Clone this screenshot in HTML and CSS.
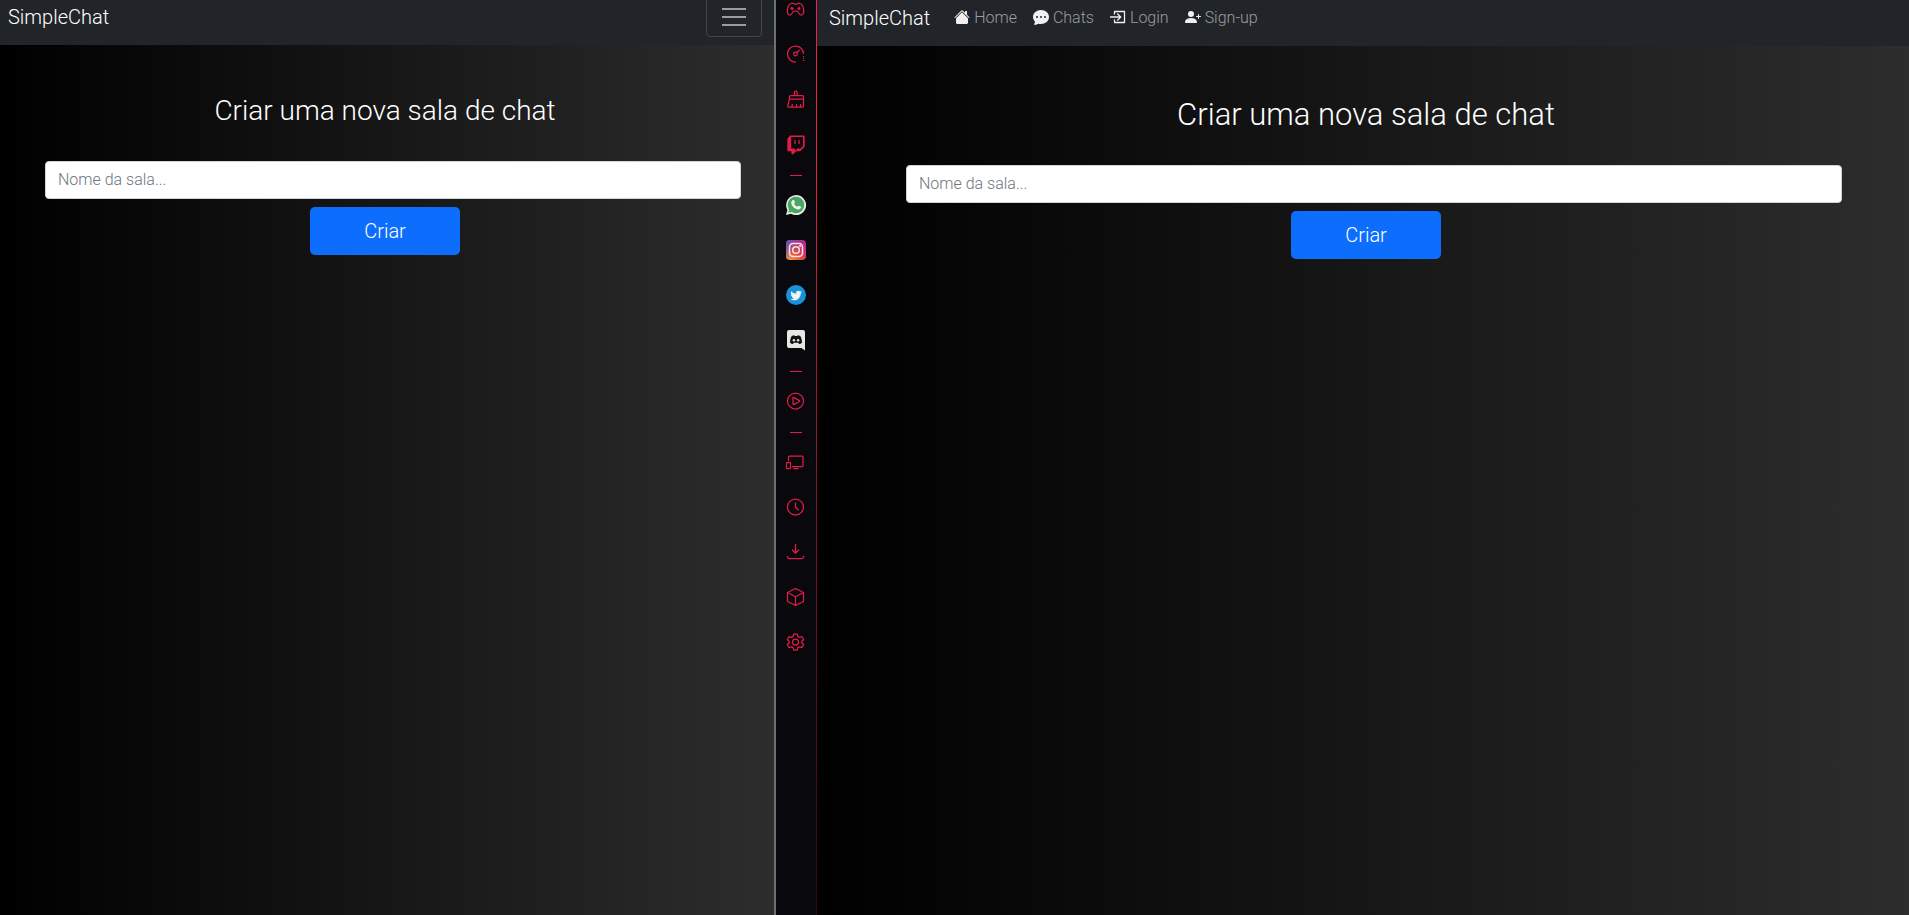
FILE: index.html
```html
<!DOCTYPE html>
<html lang="pt-BR">
<head>
<meta charset="utf-8">
<title>SimpleChat</title>
<link rel="stylesheet" href="styles.css">
</head>
<body>
<div class="screen">
  <section class="pane pane-narrow">
    <nav class="navbar">
      <a class="brand" href="#">SimpleChat</a>
      <button class="toggler" type="button" aria-label="Menu">
        <svg width="30" height="30" viewBox="0 0 30 30" fill="none" stroke="currentColor" stroke-width="2"><path d="M3 7h24M3 15h24M3 23h24"/></svg>
      </button>
    </nav>
    <main class="content">
      <h2 class="title">Criar uma nova sala de chat</h2>
      <form class="room-form">
        <input class="room-input" type="text" placeholder="Nome da sala..." aria-label="Nome da sala">
        <button class="create" type="button">Criar</button>
      </form>
    </main>
  </section>

  <aside class="sidebar">
    <button class="tool" type="button" aria-label="GX Corner"><svg viewBox="0 0 20 20"><path d="M5 4.500C6.500 3.500 7.500 4.500 8.500 5h2C11.500 4.500 12.500 3.500 14 4.500c2.500 1 3.500 4 3.700 7 .2 3-1 4.500-2.700 4.500-2 0-2.400-3.800-4-3.800H8C6.400 12.200 6 16 4 16c-1.700 0-2.900-1.500-2.700-4.500C1.500 8.500 2.500 5.500 5 4.500z"/><path class="fill" d="M5 9.500l1-1 1 1-1 1zM12 9.500l1-1 1 1-1 1z"/></svg></button>
    <button class="tool" type="button" aria-label="GX Control"><svg viewBox="0 0 20 20"><path d="M10 18a8 8 0 1 1 7.500-8"/><path d="M17.500 12v5" stroke-dasharray="1 1"/><circle cx="9.500" cy="10" r="1.800"/><path d="M10.800 8.700L13.500 6"/></svg></button>
    <button class="tool" type="button" aria-label="GX Cleaner"><svg viewBox="0 0 20 20"><path d="M8.500 6.500V3.500a1.300 1.300 0 0 1 2.600 0v3M3.500 10V7.500q0-1 1-1h12q1 0 1 1V17q0 1-1 1h-14q-1 0-.8-1L3.500 10zM3.500 10h14M6.500 15l-.8 3M10.500 15v3M14.500 15v3"/></svg></button>
    <button class="tool" type="button" aria-label="Twitch"><svg viewBox="0 0 20 20"><path class="fill" d="M4.500 2h13.500v10.500L14 16.500h-4L7 19.500H6v-2.800H2V5z"/><path fill="#08080d" stroke="none" d="M5.200 3H17v9l-2.500 2.500h-3L9 16.500v-2H5.200z"/><path d="M9 6v4M13 6v4"/></svg></button>
    <hr class="rule">
    <button class="tool" type="button" aria-label="WhatsApp"><svg viewBox="0 0 20 20"><path fill="#e9ecea" stroke="none" d="M0 20l1.400-5A10 10 0 1 1 5 18.700z"/><path fill="#48a860" stroke="none" d="M2.200 17.800l.9-3.200A8.300 8.300 0 1 1 5.600 17z"/><path fill="#f2f6f2" stroke="none" d="M6.700 5.100c.7-.4 1.200-.2 1.500.5l.7 1.600c.2.600-.7 1.200-.8 1.600.6 1.400 1.700 2.500 3.200 3 .4 0 .9-1.200 1.500-1l1.700.8c.7.300.7.700.4 1.500-.5 1.200-2 1.700-3.300 1.300-3.400-.9-5.600-3.200-6.300-6-.2-1.300.4-2.600 1.400-3.300z"/></svg></button>
    <button class="tool" type="button" aria-label="Instagram"><svg viewBox="0 0 20 20"><defs><linearGradient id="ig" x1="0" y1="1" x2="1" y2="0"><stop offset="0" stop-color="#f3ae3e"/><stop offset=".4" stop-color="#e7503f"/><stop offset=".7" stop-color="#c8307e"/><stop offset="1" stop-color="#a02c9b"/></linearGradient><linearGradient id="igb" x1="0" y1="0" x2=".6" y2=".4"><stop offset="0" stop-color="#3f5fd0"/><stop offset="1" stop-color="#7a3cc0" stop-opacity="0"/></linearGradient></defs><rect width="20" height="20" rx="4" fill="url(#ig)" stroke="none"/><rect width="20" height="20" rx="4" fill="url(#igb)" stroke="none"/><g stroke="#f6e6e4" stroke-width="1.500"><rect x="3.500" y="3.500" width="13" height="13" rx="3.500"/><circle cx="10" cy="10" r="3.300"/></g><circle cx="14" cy="6" r="1" fill="#f6e6e4" stroke="none"/></svg></button>
    <button class="tool" type="button" aria-label="Twitter"><svg viewBox="0 0 20 20"><circle cx="10" cy="10" r="10" fill="#1b91da" stroke="none"/><path transform="translate(4.300 4.300) scale(.73)" fill="#eef3f6" stroke="none" d="M5.026 15c6.038 0 9.341-5.003 9.341-9.334q.002-.211-.006-.422A6.700 6.700 0 0 0 16 3.542a6.700 6.700 0 0 1-1.889.518 3.300 3.300 0 0 0 1.447-1.817 6.500 6.500 0 0 1-2.087.793A3.286 3.286 0 0 0 7.875 6.030a9.320 9.320 0 0 1-6.767-3.429 3.290 3.290 0 0 0 1.018 4.382A3.300 3.300 0 0 1 .64 6.575v.045a3.290 3.290 0 0 0 2.632 3.218 3.200 3.200 0 0 1-.865.115 3 3 0 0 1-.614-.057 3.280 3.280 0 0 0 3.067 2.277A6.600 6.600 0 0 1 .780 13.580a6 6 0 0 1-.780-.045A9.340 9.340 0 0 0 5.026 15"/></svg></button>
    <button class="tool" type="button" aria-label="Discord"><svg viewBox="0 0 20 20"><path fill="#e6e6e3" stroke="none" d="M3 0h14q2 0 2 2v18.500L15.500 18H3q-2 0-2-2V2q0-2 2-2z"/><path fill="#111114" stroke="none" d="M5.500 6.200Q7 5.200 8.300 5.200l.4.800h2.600l.4-.8q1.300 0 2.800 1 1.700 3 1.500 6.500-1.500 1.200-3 1.400l-.8-1.300H7.800L7 14.100q-1.500-.2-3-1.400-.2-3.500 1.500-6.500z"/><circle cx="7.900" cy="10.200" r="1.200" fill="#e6e6e3" stroke="none"/><circle cx="12.100" cy="10.200" r="1.200" fill="#e6e6e3" stroke="none"/></svg></button>
    <hr class="rule">
    <button class="tool" type="button" aria-label="Player"><svg viewBox="0 0 20 20"><circle cx="9.500" cy="10" r="8"/><path d="M7 6.800v6.400q0 .6.600.4l5.800-3.100q.5-.5 0-.9L7.600 6.400Q7 6.200 7 6.800z"/></svg></button>
    <hr class="rule">
    <button class="tool" type="button" aria-label="My Flow"><svg viewBox="0 0 20 20"><path d="M2.500 9.500V5q0-1 1-1H16q1 0 1 1v8.500q0 1-1 1H6M7.500 16.500h5"/><rect x=".5" y="10.500" width="4" height="6" rx=".5"/></svg></button>
    <button class="tool" type="button" aria-label="Histórico"><svg viewBox="0 0 20 20"><circle cx="9.500" cy="10" r="8"/><path d="M9.500 5.500V10l3.200 3.200"/></svg></button>
    <button class="tool" type="button" aria-label="Downloads"><svg viewBox="0 0 20 20"><path d="M9.500 2v9M6 7.700l3.500 3.500L13 7.700M1.500 14v1q0 1.500 1.500 1.500h13q1.500 0 1.500-1.500v-1"/></svg></button>
    <button class="tool" type="button" aria-label="Extensões"><svg viewBox="0 0 20 20"><path d="M9.500 1.500l8 4v9l-8 4-8-4v-9zM1.500 5.500l8 4.300 8-4.300M9.500 9.800v8.700"/></svg></button>
    <button class="tool" type="button" aria-label="Configurações"><svg viewBox="0 0 20 20"><path d="M7.700 2h3.600l.6 2.500 1.500.9 2.500-.8 1.800 3.100-1.900 1.600v1.500l1.900 1.700-1.800 3.100-2.500-.8-1.500.8-.6 2.500H7.700l-.6-2.500-1.500-.8-2.500.8-1.800-3.100 1.900-1.700V9.300L1.300 7.700l1.800-3.100 2.500.8 1.500-.9z"/><circle cx="9.500" cy="10" r="3"/></svg></button>
  </aside>

  <section class="pane pane-wide">
    <nav class="navbar">
      <a class="brand" href="#">SimpleChat</a>
      <ul class="links">
        <li><a class="link" href="#"><svg viewBox="0 0 16 16"><path d="m8 3.293 6 6V13.500a1.500 1.500 0 0 1-1.500 1.500h-9A1.500 1.500 0 0 1 2 13.500V9.293z"/><path d="M7.293 1.500a1 1 0 0 1 1.414 0L11 3.793V2.500a.5.500 0 0 1 .5-.5h1a.5.500 0 0 1 .5.500v3.293l2.354 2.353a.5.500 0 0 1-.708.708L8 2.207 1.354 8.854a.5.500 0 1 1-.708-.708z"/></svg>Home</a></li>
        <li><a class="link" href="#"><svg viewBox="0 0 16 16"><path d="M16 8c0 3.866-3.582 7-8 7a9 9 0 0 1-2.347-.306c-.584.296-1.925.864-4.181 1.234-.2.032-.352-.176-.273-.362.354-.836.674-1.950.770-2.966C.744 11.370 0 9.760 0 8c0-3.866 3.582-7 8-7s8 3.134 8 7M5 8a1 1 0 1 0-2 0 1 1 0 0 0 2 0m4 0a1 1 0 1 0-2 0 1 1 0 0 0 2 0m3 1a1 1 0 1 0 0-2 1 1 0 0 0 0 2"/></svg>Chats</a></li>
        <li><a class="link" href="#"><svg viewBox="0 0 16 16"><g fill="none" stroke="currentColor" stroke-width="1.300" stroke-linecap="round" stroke-linejoin="round"><path d="M4.500 5V2.500h10v11h-10V11"/><path d="M.5 8h10M7.700 5l3 3-3 3"/></g></svg>Login</a></li>
        <li><a class="link" href="#"><svg viewBox="0 0 16 16"><path d="M1 14s-1 0-1-1 1-4 6-4 6 3 6 4-1 1-1 1zm5-6a3 3 0 1 0 0-6 3 3 0 0 0 0 6"/><path d="M13.500 5a.5.500 0 0 1 .5.500V7h1.500a.5.500 0 0 1 0 1H14v1.500a.5.500 0 0 1-1 0V8h-1.500a.5.500 0 0 1 0-1H13V5.500a.5.500 0 0 1 .5-.5"/></svg>Sign-up</a></li>
      </ul>
    </nav>
    <main class="content">
      <h2 class="title">Criar uma nova sala de chat</h2>
      <form class="room-form">
        <input class="room-input" type="text" placeholder="Nome da sala..." aria-label="Nome da sala">
        <button class="create" type="button">Criar</button>
      </form>
    </main>
  </section>
</div>
</body>
</html>
```
FILE: styles.css
```css
* { box-sizing: border-box; }

body {
  margin: 0;
  background: #000;
  color: #fff;
  font-family: Roboto, "Liberation Sans", sans-serif;
  font-size: 16px;
  font-weight: 300;
  line-height: 24px;
}

.screen {
  display: grid;
  grid-template-columns: minmax(0, 774fr) 43px minmax(0, 1092fr);
  height: 100vh;
  overflow: hidden;
}

.pane {
  min-width: 0;
  background: linear-gradient(to right, #000, #2d2d2d);
}

/* Both windows are scrolled slightly past the top of the navbar. */
.navbar {
  display: flex;
  align-items: center;
  height: 56px;
  margin-top: -10px;
  padding: 0 12px;
  background: #212529;
}

.pane-narrow .navbar {
  justify-content: space-between;
  margin-top: -11px;
  padding-left: 8px;
}

.brand {
  color: #fff;
  font-size: 20px;
  line-height: 30px;
  text-decoration: none;
}

.toggler {
  display: flex;
  align-items: center;
  justify-content: center;
  width: 56px;
  height: 40px;
  padding: 0;
  border: 1px solid #444545;
  border-radius: 4px;
  background: transparent;
  color: #9b9d9c;
}

.links {
  display: flex;
  gap: 16px;
  margin: 0 0 0 24px;
  padding: 0;
  list-style: none;
}

.link {
  display: flex;
  align-items: center;
  gap: 4px;
  color: #9b9d9f;
  text-decoration: none;
}

.link svg {
  width: 16px;
  height: 16px;
  margin-bottom: 2px;
  color: #f0f0f0;
  fill: currentColor;
}

.content { padding-top: 48px; }
.pane-narrow .content { padding-right: 4px; }
.pane-wide .content { padding-left: 6px; }

.title {
  margin: 0 0 29px;
  font-size: 31px;
  font-weight: 300;
  line-height: 42px;
  text-align: center;
}

.pane-narrow .title {
  margin-bottom: 32px;
  font-size: 28px;
  line-height: 36px;
}

.room-form {
  display: flex;
  flex-direction: column;
  align-items: center;
  gap: 8px;
}

.room-input {
  align-self: stretch;
  height: 38px;
  margin: 0 67px 0 83px;
  padding: 5px 12px 7px;
  border: 1px solid #ced4da;
  border-radius: 4px;
  background: #fff;
  color: #212529;
  font: inherit;
}

.pane-narrow .room-input { margin: 0 29px 0 45px; }

.room-input::placeholder {
  color: #6c757d;
  opacity: 1;
}

.create {
  width: 150px;
  height: 48px;
  padding: 8px 16px;
  border: 0;
  border-radius: 5px;
  background: #0d6efd;
  color: #fff;
  font: inherit;
  font-size: 20px;
}

.sidebar {
  display: flex;
  flex-direction: column;
  align-items: center;
  padding-right: 1px;
  border-left: 2px solid #6f6f6f;
  background:
    linear-gradient(#f01e4b 16%, #a3172f 42%, #5a0e1e 75%, #2c0a14) right / 1px 100% no-repeat,
    #08080d;
  overflow: hidden;
}

.tool {
  display: flex;
  flex: none;
  align-items: center;
  justify-content: center;
  width: 40px;
  height: 45px;
  padding: 0 0 1px;
  border: 0;
  background: transparent;
  color: #e31c46;
}

.tool:first-child { margin-top: -13px; }

.tool svg {
  width: 20px;
  height: 20px;
  overflow: visible;
  fill: none;
  stroke: currentColor;
  stroke-width: 1.25;
  stroke-linejoin: round;
}

.tool .fill { fill: currentColor; }

.rule {
  flex: none;
  width: 12px;
  height: 1px;
  margin: 8px 0 7px;
  border: 0;
  background: #e31c46;
}
```
